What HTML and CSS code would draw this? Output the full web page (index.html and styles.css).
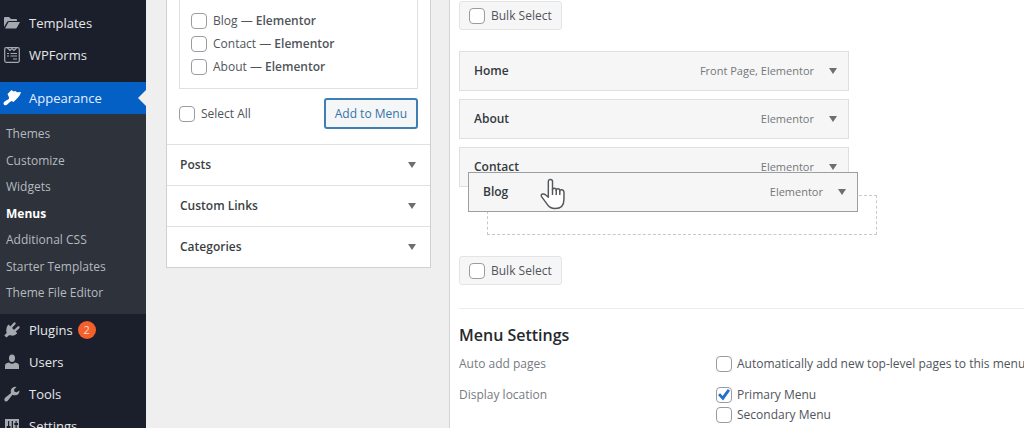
FILE: index.html
```html
<!DOCTYPE html>
<html lang="en">
<head>
<meta charset="utf-8">
<title>Menus</title>
<link rel="stylesheet" href="styles.css">
</head>
<body>
<div class="layout">
  <nav class="sidebar" aria-label="Admin menu">
    <ul class="nav">
      <li><a class="nav-link" href="#">
        <svg class="icon" viewBox="0 0 16 16"><path d="M0 3Q0 2 1 2H5L7 4H12Q13 4 13 5V6H5Q3.600 6 3 7L0 12Z"/><path d="M5 7H16L13 12.500Q12.500 13.500 11.500 13.500H1L4 8Q4.300 7 5 7Z"/></svg>Templates</a></li>
      <li><a class="nav-link" href="#">
        <svg class="icon icon-line" viewBox="0 0 16 16"><rect x=".7" y=".7" width="14.600" height="14.600" rx="1.500"/><path d="M3.500 1L6 3.500L8 1.500L10 3.500L12.500 1M3 6.500H5M6.500 6.500H13M3 9H5M6.500 9H13M9 12H13"/></svg>WPForms</a></li>
    </ul>
    <ul class="nav">
      <li>
        <a class="nav-link nav-current" href="#">
          <svg class="icon" viewBox="0 0 16 16"><path d="M3.500 4L7.500 0L9.500 1.500L11.500 1L13 2.300L17 2Q16.500 4.800 14 7.500L9.500 12L7.500 11Q5.500 12 4 13.800Q2 16 .2 15Q-1.500 13.500 .3 11.800Q2 10.500 4.500 9.300Q5.500 8.500 5 7.300Z"/></svg>Appearance</a>
        <ul class="subnav">
          <li><a href="#">Themes</a></li>
          <li><a href="#">Customize</a></li>
          <li><a href="#">Widgets</a></li>
          <li><a class="active" href="#">Menus</a></li>
          <li><a href="#">Additional CSS</a></li>
          <li><a href="#">Starter Templates</a></li>
          <li><a href="#">Theme File Editor</a></li>
        </ul>
      </li>
      <li><a class="nav-link" href="#">
        <svg class="icon" viewBox="0 0 16 16"><path d="M4.500 2.500L13.300 11.300Q10.500 14.500 6.500 13.300L5 13.200L2.500 15.500L.3 13.500L2.700 11Q1.300 6 4.500 2.500Z"/><path class="prong" d="M7.300 5L10.500 1.500M11 8.700L14.500 5.300"/></svg>Plugins<span class="count">2</span></a></li>
      <li><a class="nav-link" href="#">
        <svg class="icon" viewBox="0 0 16 16"><ellipse cx="8" cy="4.300" rx="3" ry="3.700"/><path d="M1 15V11.500Q1 9 5 8.500Q8 11 11 8.500Q15 9 15 11.500V15Z"/></svg>Users</a></li>
      <li><a class="nav-link" href="#">
        <svg class="icon" viewBox="0 0 16 16"><path d="M15.500 4.500Q15.500 9 11 9.300Q9.500 9.300 8.500 8.800L3.700 14.700Q2.300 16 .8 14.900Q-.4 13.500 1.100 11.800L7 7Q6 3.500 8.500 1.700Q10.500 .3 12.500 1L10 3.500L10.500 5.700L12.700 6.200Z"/></svg>Tools</a></li>
      <li><a class="nav-link" href="#">
        <svg class="icon" viewBox="0 0 16 16"><path fill-rule="evenodd" d="M1 1H15V15H1ZM4 3V8H2.700V10H4V13H5.200V10H6.500V8H5.200V3ZM7.700 3V10H6.800V11.500H10V10H9V3ZM11.500 3V5H10.300V7H11.500V13H12.700V7H14V5H12.700V3Z"/></svg>Settings</a></li>
    </ul>
  </nav>

  <main class="content">
    <section class="panel" aria-label="Add menu items">
      <div class="panel-body">
        <div class="choices">
          <label class="check"><input type="checkbox"><span>Blog — <b>Elementor</b></span></label>
          <label class="check"><input type="checkbox"><span>Contact — <b>Elementor</b></span></label>
          <label class="check"><input type="checkbox"><span>About — <b>Elementor</b></span></label>
        </div>
        <div class="actions">
          <label class="check"><input type="checkbox"><span>Select All</span></label>
          <button class="add" type="button">Add to Menu</button>
        </div>
      </div>
      <button class="fold" type="button">Posts<i class="caret"></i></button>
      <button class="fold" type="button">Custom Links<i class="caret"></i></button>
      <button class="fold" type="button">Categories<i class="caret"></i></button>
    </section>

    <section class="editor" aria-label="Menu structure">
      <label class="check bulk"><input type="checkbox"><span>Bulk Select</span></label>
      <ul class="items">
        <li class="item"><b>Home</b><span class="kind">Front Page, Elementor</span><i class="caret"></i></li>
        <li class="item"><b>About</b><span class="kind">Elementor</span><i class="caret"></i></li>
        <li class="item"><b>Contact</b><span class="kind">Elementor</span><i class="caret"></i></li>
        <li class="drop">
          <div class="item dragged"><b>Blog</b><span class="kind">Elementor</span><i class="caret"></i>
            <svg class="cursor" viewBox="0 0 24 30"><path d="M8 18V3Q8 1 10 1T12 3V11Q12 9.500 13.800 9.500T15.600 11.500Q15.600 10 17.300 10T19 12Q19.300 10.800 21 11T23 13V20Q23 29 14.500 29Q9.500 29 7 25L1.500 17.500Q.5 15.500 2.500 15Q4 14.700 5.500 16Z"/><path d="M12 10V16M15.600 11V16M19 12V16"/></svg>
          </div>
        </li>
      </ul>
      <label class="check bulk"><input type="checkbox"><span>Bulk Select</span></label>
      <div class="settings">
        <h2>Menu Settings</h2>
        <div class="setting" role="group" aria-labelledby="auto">
          <span class="legend" id="auto">Auto add pages</span>
          <div class="options">
            <label class="check"><input type="checkbox"><span>Automatically add new top-level pages to this menu</span></label>
          </div>
        </div>
        <div class="setting" role="group" aria-labelledby="location">
          <span class="legend" id="location">Display location</span>
          <div class="options">
            <label class="check"><input type="checkbox" checked><span>Primary Menu</span></label>
            <label class="check"><input type="checkbox"><span>Secondary Menu</span></label>
          </div>
        </div>
      </div>
    </section>
  </main>
</div>
</body>
</html>
```
FILE: styles.css
```css
* { box-sizing: border-box; }
html, body { height: 100%; }
body {
  margin: 0;
  overflow: hidden;
  background: #efeff0;
  color: #50555b;
  font: 12px/20px "Open Sans", "Noto Sans", sans-serif;
}
ul { margin: 0; padding: 0; list-style: none; }
a { color: inherit; text-decoration: none; }
b { font-weight: 600; }
button { font: inherit; cursor: pointer; }

.layout { display: flex; height: 100%; overflow: hidden; }

.sidebar {
  flex: 0 0 146px;
  display: flex;
  flex-direction: column;
  gap: 11px;
  padding-top: 7px;
  background: #1a1f2b;
  color: #e6e7e9;
}
.nav-link {
  position: relative;
  display: flex;
  align-items: center;
  height: 32px;
  padding-left: 4px;
  font-size: 13px;
}
.icon { width: 16px; height: 16px; margin-right: 9px; fill: #a5aab0; overflow: visible; }
.icon-line { fill: none; stroke: #a5aab0; stroke-width: 1.2; }
.prong { stroke: #a5aab0; stroke-width: 2.4; stroke-linecap: round; }
.nav-current { background: #0560c6; color: #e3efff; }
.nav-current .icon { fill: #fff; }
.nav-current::after {
  content: "";
  position: absolute;
  right: 0;
  border: 8px solid transparent;
  border-right-color: #efeff0;
  border-left: 0;
}
.subnav {
  display: flex;
  flex-direction: column;
  justify-content: space-between;
  min-height: 200px;
  padding: 7px 6px 9px;
  background: #2d323b;
  color: #b6babf;
  line-height: 25px;
}
.active { color: #fff; font-weight: 700; }
.count {
  width: 18px;
  margin-left: 5px;
  border-radius: 9px;
  background: #f4602b;
  color: #fbd9cc;
  font-size: 11px;
  line-height: 18px;
  text-align: center;
}

.content { flex: 1; display: flex; align-items: flex-start; min-width: 0; height: 100%; padding-left: 20px; }

.panel {
  flex: 0 0 265px;
  margin-right: 18px;
  border: 1px solid #cfd0d2;
  border-top: 0;
  background: #fff;
}
.panel-body { padding: 0 12px 15px; }
.choices {
  display: flex;
  flex-direction: column;
  gap: 3px;
  padding: 11px;
  border: 1px solid #dfe0e1;
  border-top: 0;
}
.actions { display: flex; align-items: center; justify-content: space-between; padding-top: 9px; }
.add {
  height: 31px;
  padding: 0 9px;
  border: 2px solid #3d7fb4;
  border-radius: 3px;
  background: #f5f6f7;
  color: #3574a8;
}
.fold {
  display: flex;
  align-items: center;
  justify-content: space-between;
  width: 100%;
  min-height: 41px;
  padding: 0 14px 0 13px;
  border: 0;
  border-top: 1px solid #dfe0e1;
  background: #fff;
  color: #3a3f45;
  font-weight: 600;
}
.caret {
  border: 4px solid transparent;
  border-top: 6px solid #6b6e72;
  border-bottom: 0;
}

.check { display: flex; align-items: center; gap: 6px; white-space: nowrap; }
.check input {
  appearance: none;
  flex: none;
  display: grid;
  place-items: center;
  width: 16px;
  height: 16px;
  margin: 0;
  border: 1px solid #999da2;
  border-radius: 4px;
  background: #fff;
}
.check input:checked::before {
  content: "";
  width: 12px;
  height: 12px;
  background: #2271c8;
  clip-path: polygon(0 50%, 18% 36%, 38% 58%, 82% 0, 100% 14%, 42% 96%);
}

.editor {
  flex: 1;
  min-width: 0;
  height: 100%;
  padding: 1px 0 0 9px;
  border-left: 1px solid #d3d4d6;
  background: #fff;
}
.bulk {
  width: fit-content;
  height: 29px;
  padding: 0 9px;
  border: 1px solid #e3e4e5;
  border-radius: 3px;
  background: #f6f6f7;
}
.items { display: grid; gap: 8px; max-width: 390px; margin: 21px 0; }
.item {
  display: flex;
  align-items: center;
  height: 40px;
  padding: 0 11px 0 14px;
  border: 1px solid #dedfe0;
  background: #f6f6f6;
  color: #34393e;
}
.kind { margin: 0 15px 0 auto; color: #73777c; font-size: 11px; }
.drop {
  position: relative;
  height: 40px;
  margin: 0 -28px 0 28px;
  border: 1px dashed #c6c8ca;
}
.dragged {
  position: absolute;
  top: -24px;
  left: -20px;
  width: calc(100% + 2px);
  border-color: #9c9ea1;
}
.cursor {
  position: absolute;
  top: 5px;
  left: 71px;
  width: 25px;
  height: 32px;
  fill: #fff;
  stroke: #54575b;
  stroke-width: 1.4;
  stroke-linejoin: round;
}

.settings { margin-top: 23px; padding-top: 14px; border-top: 1px solid #ededee; }
h2 { margin: 0 0 7px; color: #25292e; font-size: 16px; font-weight: 600; line-height: 24px; }
.setting { display: flex; margin-bottom: 11px; }
.legend { flex: 0 0 257px; color: #777b80; }
.options .check { gap: 5px; }
```
